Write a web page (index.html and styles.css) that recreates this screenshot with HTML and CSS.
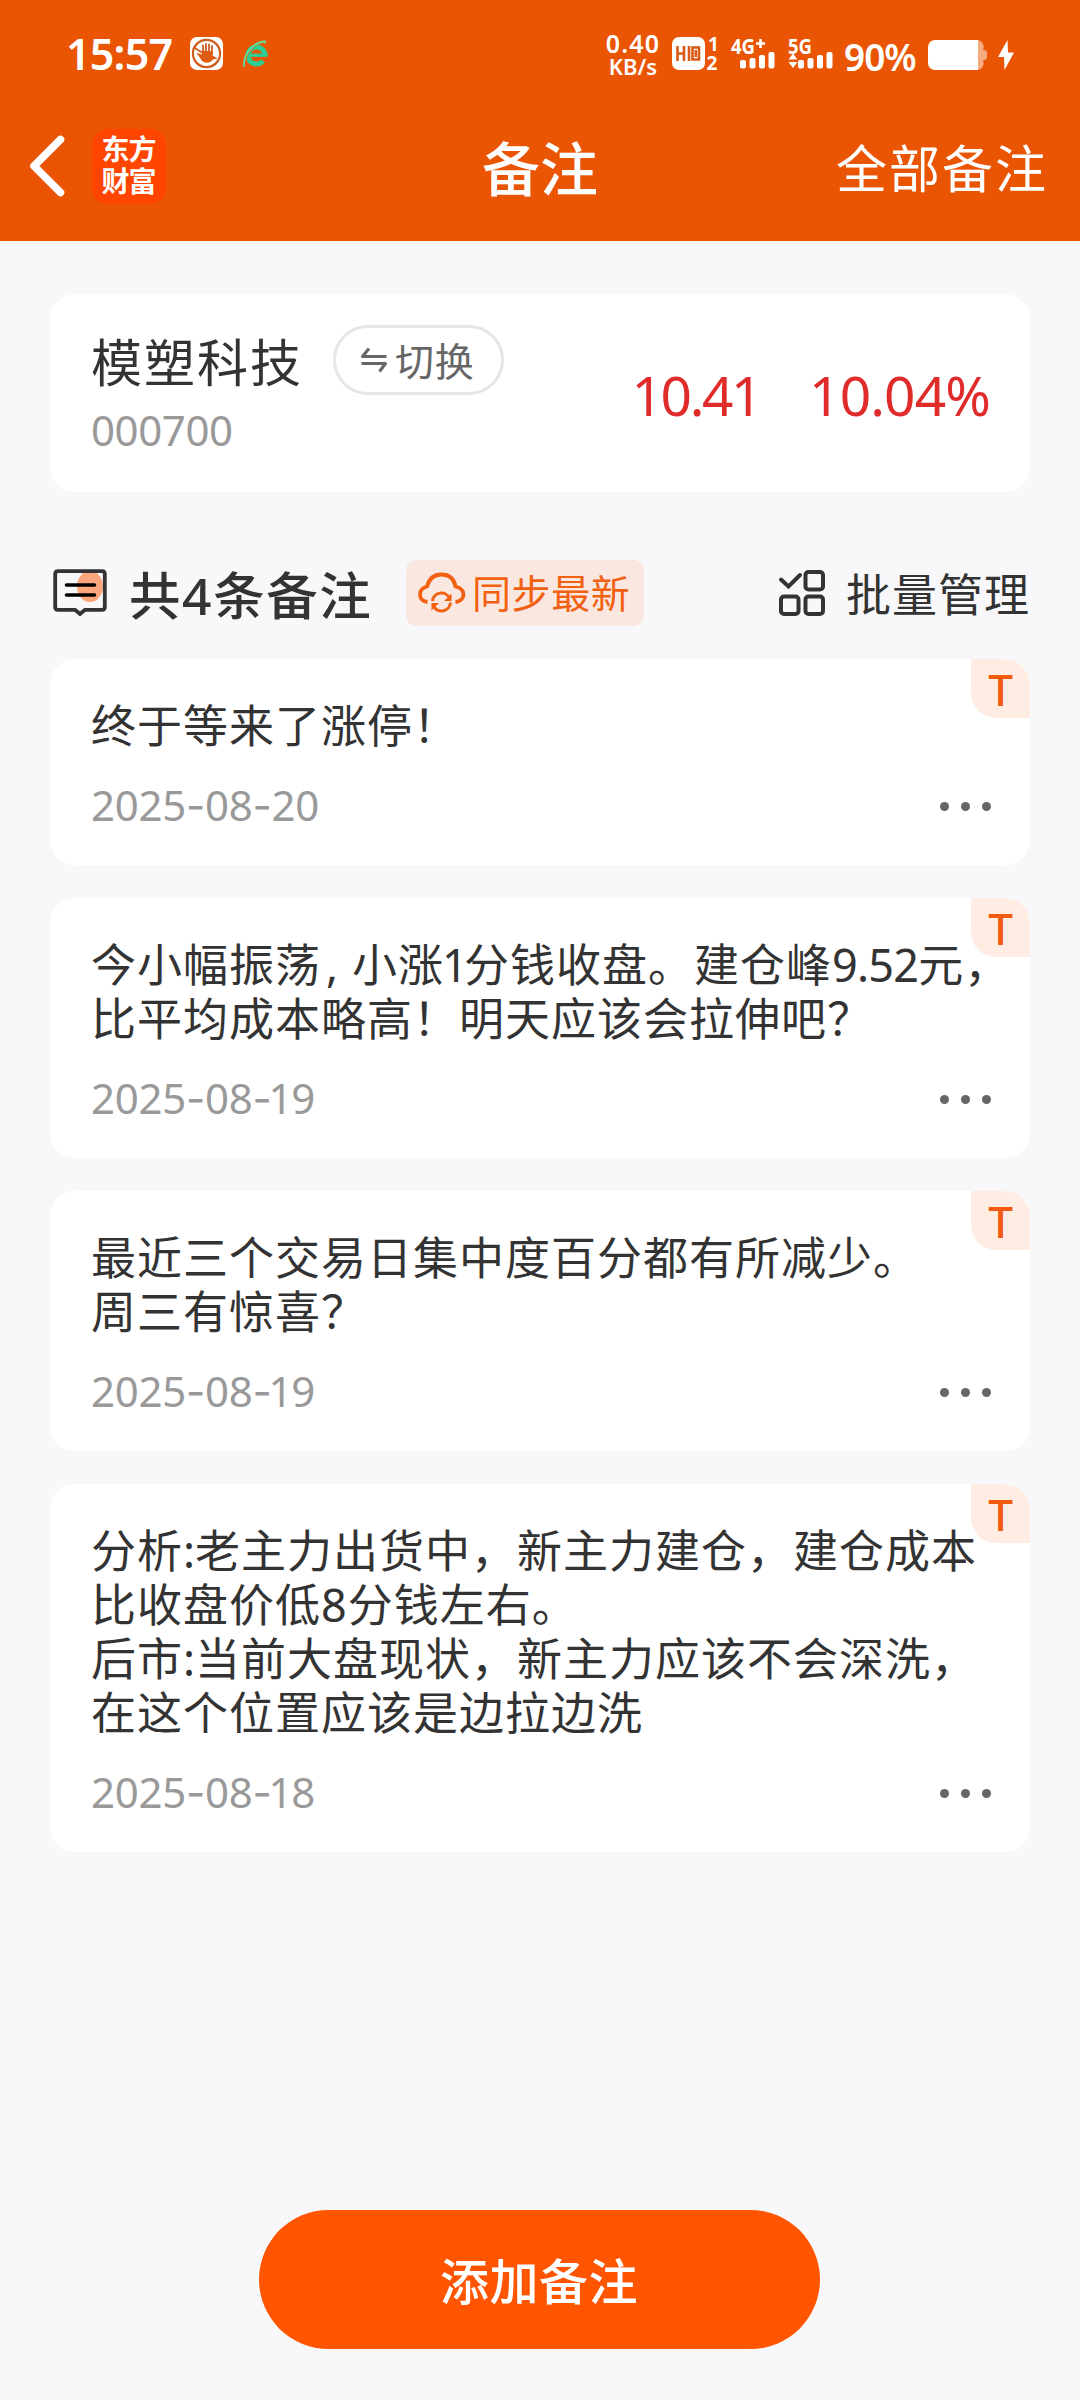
FILE: index.html
```html
<!DOCTYPE html>
<html lang="zh-CN">
<head>
<meta charset="utf-8">
<title>备注</title>
<link rel="stylesheet" href="styles.css">
</head>
<body>
<header class="top">
  <div class="status">
    <span class="clock">15:57</span>
    <svg class="hand" width="33" height="33" viewBox="0 0 33 33">
      <rect width="33" height="33" rx="7" fill="#fff"/>
      <circle cx="16.500" cy="16.500" r="13.600" fill="none" stroke="#cf5c1c" stroke-width="2.200"/>
      <path d="M4 10.500 12 15.500M13 8.500v7M16 7v9M19 7.500v9M22 9v8" fill="none" stroke="#cf5c1c" stroke-width="1.800" stroke-linecap="round"/>
      <path d="M6.500 16.500c3-1 4 1 5.500 1l-.500-4 11 1v4l5 3c-2 1-4 0-5 1.500-3 4-9 3.500-11.500-.500-1.500-2.500-2.500-4-4.500-6z" fill="#dd5c12"/>
    </svg>
    <svg class="browser" width="26" height="29" viewBox="0 0 26 29">
      <path d="M22 16.500A8.500 8.500 0 1 0 20 22" fill="none" stroke="#2bcf94" stroke-width="5"/>
      <path d="M6 16.200H24.500" stroke="#2bcf94" stroke-width="3.400"/>
      <path d="M3 26C1 17 9 6 19 3.500" fill="none" stroke="#e95502" stroke-width="1.200"/>
      <path d="M1.500 28C-1 18 9 3 22 2.500l-.500 2" fill="none" stroke="#63dfa0" stroke-width="1.800"/>
    </svg>
    <span class="speed"><b>0.40</b><b class="unit">KB/s</b></span>
    <svg class="hd" width="47" height="36" viewBox="0 0 47 36">
      <rect y="1" width="33" height="33" rx="7" fill="#fff"/>
      <path d="M5.500 10v15M12 10v15M5.500 17.500H12M17 10v15M20.500 11.500h6.500v12H20.500zM23.800 14v7" fill="none" stroke="#d85a14" stroke-width="2.600"/>
      <text class="tiny" x="36" y="14.500">1</text>
      <text class="tiny" x="34.500" y="33.500">2</text>
    </svg>
    <svg class="net" width="46" height="36" viewBox="0 0 46 36">
      <text class="gen" x="0" y="17.500" textLength="24" lengthAdjust="spacingAndGlyphs">4G</text>
      <path d="M25 7.500h9M29.500 3v9" stroke="#fff" stroke-width="2.600"/>
      <g fill="#fff"><rect x="9" y="24" width="6" height="8.500" rx="2"/><rect x="18.500" y="22" width="6" height="10.500" rx="2"/><rect x="28" y="19" width="6" height="13.500" rx="2"/><rect x="37.500" y="16" width="6" height="16.500" rx="2"/></g>
    </svg>
    <svg class="net net-b" width="47" height="36" viewBox="0 0 47 36">
      <text class="gen" x="0" y="17.500" textLength="24" lengthAdjust="spacingAndGlyphs">5G</text>
      <path d="M5 17.500 9.500 23.500H.5zM5 32 .5 26h9z" fill="#fff"/>
      <g fill="#fff"><rect x="10" y="24" width="6" height="8.500" rx="2"/><rect x="19.500" y="22" width="6" height="10.500" rx="2"/><rect x="29" y="19" width="6" height="13.500" rx="2"/><rect x="38.500" y="16" width="6" height="16.500" rx="2"/></g>
    </svg>
    <span class="percent">90%</span>
    <svg class="battery" width="60" height="30" viewBox="0 0 60 30">
      <path d="M48 0h2a7 7 0 0 1 5 10h1q3 0 3 3v4q0 3-3 3h-1a7 7 0 0 1-5 10h-2z" fill="#f6ab80"/>
      <path d="M7 0h43v30H7a7 7 0 0 1-7-7V7a7 7 0 0 1 7-7z" fill="#fff"/>
    </svg>
    <svg class="bolt" width="16" height="30" viewBox="0 0 16 30"><path d="M9.500 0 0 17h6L6.500 30 16 12.500h-6z" fill="#fff"/></svg>
  </div>
  <nav class="nav">
    <div class="nav-left">
      <svg width="36" height="62" viewBox="0 0 36 62"><path d="M31.500 4.500 5 31 31.500 57.500" fill="none" stroke="#fff" stroke-width="7.600" stroke-linecap="round" stroke-linejoin="round"/></svg>
      <div class="logo"><span>东方</span><span>财富</span></div>
    </div>
    <h1 class="title">备注</h1>
    <a class="all">全部备注</a>
  </nav>
</header>

<main class="content">
  <section class="stock">
    <div>
      <div class="name-row">
        <span class="name">模塑科技</span>
        <button class="switch">
          <svg width="28" height="28" viewBox="0 0 28 28"><path d="M26.500 10.500H2.500L9 2.500M1.500 17.500H25.500L19.500 25.500" fill="none" stroke="#666" stroke-width="3" stroke-linejoin="round"/></svg>
          <span>切换</span>
        </button>
      </div>
      <div class="code">000700</div>
    </div>
    <div class="quote"><span class="price">10.41</span><span class="pct">10.04%</span></div>
  </section>

  <section class="bar">
    <svg class="note-icon" width="54" height="48" viewBox="0 0 54 48">
      <ellipse cx="37" cy="17.500" rx="13" ry="15.500" fill="#fca67e"/>
      <path d="M5 2.200h44q2.800 0 2.800 2.800v33q0 2.800-2.800 2.800H32L27 45l-5-4.200H5q-2.800 0-2.800-2.800V5q0-2.800 2.800-2.800z" fill="none" stroke="#333" stroke-width="3.800" stroke-linejoin="round"/>
      <path d="M13.500 16h28M13.500 26h28" stroke="#000" stroke-width="3.600" stroke-linecap="round"/>
    </svg>
    <h2 class="count">共<span>4</span>条备注</h2>
    <button class="sync">
      <svg width="48" height="42" viewBox="0 0 48 42" fill="none" stroke="#f26011" stroke-width="3.800">
        <path d="M9.500 30C5 29.500 2 26.500 2 22.500c0-4 3-7 7-8C11 7 16 2.500 23.500 2.500S36 7 37.500 14.500C42 15.500 45.500 18.500 45.500 22.500c0 4-3.500 7-8 7.500"/>
        <path d="M14.500 29A9 9 0 0 1 31.500 26M32.500 30.500A9 9 0 0 1 15.500 34" stroke-width="3"/>
        <path d="M33.500 21.500v7.500h-7.500zM13.500 38.500V31h7.500z" fill="#f26011" stroke="none"/>
      </svg>
      <span>同步最新</span>
    </button>
    <a class="batch">
      <svg width="46" height="46" viewBox="0 0 46 46" fill="none" stroke="#333" stroke-width="4">
        <path d="M2 9.500 9.500 16.500 21 5" stroke-linecap="round"/>
        <rect x="26.500" y="2" width="17.500" height="17.500" rx="3"/>
        <rect x="2" y="26.500" width="17.500" height="17.500" rx="3"/>
        <rect x="26.500" y="26.500" width="17.500" height="17.500" rx="3"/>
      </svg>
      <span>批量管理</span>
    </a>
  </section>

  <section class="notes">
    <article class="note">
      <span class="tag">T</span>
      <p>终于等来了涨停！</p>
      <footer><time>2025<s>-</s>08<s>-</s>20</time><span class="more"><i></i><i></i><i></i></span></footer>
    </article>
    <article class="note">
      <span class="tag">T</span>
      <p>今小幅振荡<span class="comma">,</span>小涨<span class="one">1</span>分钱收盘。建仓峰<span class="num">9.52</span>元，<br>比平均成本略高！明天应该会拉伸吧？</p>
      <footer><time>2025<s>-</s>08<s>-</s><b>1</b>9</time><span class="more"><i></i><i></i><i></i></span></footer>
    </article>
    <article class="note">
      <span class="tag">T</span>
      <p>最近三个交易日集中度百分都有所减少。<br>周三有惊喜？</p>
      <footer><time>2025<s>-</s>08<s>-</s><b>1</b>9</time><span class="more"><i></i><i></i><i></i></span></footer>
    </article>
    <article class="note">
      <span class="tag">T</span>
      <p>分析<span class="colon">:</span>老主力出货中，新主力建仓，建仓成本<br>比收盘价低8分钱左右。<br>后市<span class="colon">:</span>当前大盘现状，新主力应该不会深洗，<br>在这个位置应该是边拉边洗</p>
      <footer><time>2025<s>-</s>08<s>-</s><b>1</b>8</time><span class="more"><i></i><i></i><i></i></span></footer>
    </article>
  </section>

  <button class="add">添加备注</button>
</main>
</body>
</html>
```
FILE: styles.css
```css
* { box-sizing: border-box; }
body {
  margin: 0;
  min-height: 2400px;
  display: flex;
  flex-direction: column;
  background: #f8f8fb;
  color: #333;
  font-family: "Noto Sans", "Noto Sans CJK SC", sans-serif;
}
button { font: inherit; border: 0; padding: 0; background: none; color: inherit; }
h1, h2, p { margin: 0; }
svg { display: block; flex: none; overflow: visible; }
span, a, time { white-space: nowrap; }

.top { height: 241px; background: #e95502; color: #fff; }

.status { display: flex; height: 108px; align-items: flex-start; padding: 0 0 0 66px; }
.clock { width: 124px; margin-top: 24px; font-size: 43px; line-height: 60px; font-weight: 600; letter-spacing: -.8px; }
.hand { margin-top: 37px; }
.browser { margin: 39px 0 0 20px; }
.speed { display: flex; flex-direction: column; align-items: center; width: 56px; margin: 31px 0 0 336px; }
.speed b { font-size: 25px; line-height: 24px; font-weight: 600; letter-spacing: 1.2px; }
.speed .unit { font-size: 22px; line-height: 20px; letter-spacing: 0; margin-top: 1px; }
.hd { margin: 36px 0 0 11px; }
.tiny { font-size: 19px; font-weight: 700; fill: #fff; }
.gen { font-size: 21px; font-weight: 700; fill: #fff; }
.net { margin: 36px 0 0 12px; }
.net-b { margin-left: 11px; }
.percent { width: 83px; margin: 33px 0 0 9px; font-size: 37px; line-height: 48px; font-weight: 600; letter-spacing: -1px; }
.battery { margin: 40px 0 0 1px; }
.bolt { margin: 40px 0 0 10px; }

.nav { display: grid; grid-template-columns: 1fr auto 1fr; align-items: center; height: 116px; padding: 0 32px 0 29px; }
.nav-left { display: flex; align-items: center; gap: 27px; }
.logo { display: flex; flex-direction: column; align-items: center; width: 74px; height: 75px; padding: 4px 1px 0 0; border-radius: 16px; background: #ff4500; font-size: 28px; line-height: 32px; font-weight: 700; letter-spacing: -1px; }
.title { font-size: 58px; line-height: 80px; font-weight: 500; margin: 5px 0 0 3px; }
.all { justify-self: end; font-size: 51px; line-height: 80px; letter-spacing: 2px; margin-top: 4px; }

.content { flex: 1; display: flex; flex-direction: column; padding: 53px 50px 51px; }

.stock { display: flex; justify-content: space-between; height: 198px; padding: 31px 40px 0 41px; border-radius: 25px; background: #fff; }
.name-row { display: flex; align-items: center; height: 70px; }
.name { width: 242px; font-size: 51px; line-height: 70px; letter-spacing: 2px; margin-top: 3px; }
.switch { display: flex; align-items: center; gap: 7px; width: 171px; height: 70px; padding-left: 24px; border: 3px solid #e6e6e6; border-radius: 35px; color: #666; font-size: 39px; line-height: 62px; letter-spacing: .8px; }
.switch span { margin-top: 1px; }
.code { color: #999; font-size: 42px; line-height: 60px; margin-top: 5px; letter-spacing: -.4px; }
.quote { display: flex; gap: 49px; padding-top: 34px; color: #e02b2b; font-size: 55px; line-height: 72px; }
.price { letter-spacing: -2.4px; }
.pct { letter-spacing: -.9px; }

.bar { display: flex; align-items: center; height: 66px; margin-top: 68px; padding-left: 3px; }
.count { width: 275px; margin: 3px 0 0 22px; font-size: 51.5px; line-height: 66px; font-weight: 500; letter-spacing: 1.600px; white-space: nowrap; }
.sync { display: flex; align-items: center; gap: 6px; width: 238px; height: 66px; margin-left: 2px; padding-left: 12px; border-radius: 10px; background: #f9e7e0; color: #f26011; font-size: 39px; line-height: 60px; letter-spacing: .6px; }
.sync span { margin-top: -1px; }
.batch { display: flex; align-items: center; gap: 21px; margin-left: auto; font-size: 45px; line-height: 66px; letter-spacing: 1px; }
.batch span { margin-top: 3px; }

.notes { display: flex; flex-direction: column; gap: 33px; margin-top: 33px; }
.note { position: relative; padding: 40px 39px 0 41px; border-radius: 25px; background: #fff; overflow: hidden; }
.note p { font-size: 45px; line-height: 54px; letter-spacing: 1px; white-space: nowrap; }
.note footer { display: flex; align-items: center; justify-content: space-between; height: 112px; padding-bottom: 6px; }
.note time { color: #999; font-size: 42px; line-height: 60px; letter-spacing: -.3px; margin-top: -2px; }
.note time s { font-family: Inter, sans-serif; text-decoration: none; }
.note time b { font-weight: 400; margin: 0 -1px 0 -3px; }
.comma { display: inline-block; width: 31px; padding-left: 5px; }
.colon { display: inline-block; width: 12px; }
.one { display: inline-block; width: 20px; text-indent: -2px; }
.num { letter-spacing: -.8px; }
.tag { position: absolute; top: 0; right: 0; width: 59px; height: 59px; border-radius: 0 25px 0 25px; background: #ffede4; color: #f25a0f; font-size: 44px; line-height: 60px; font-weight: 500; text-align: center; }
.more { display: flex; gap: 12px; }
.more i { width: 9px; height: 9px; border-radius: 50%; background: #666; }

.add { align-self: center; width: 561px; height: 139px; margin: auto 0 0 -2px; border-radius: 70px; background: #f50; color: #fff; font-size: 49px; line-height: 142px; font-weight: 500; letter-spacing: .5px; }
```
